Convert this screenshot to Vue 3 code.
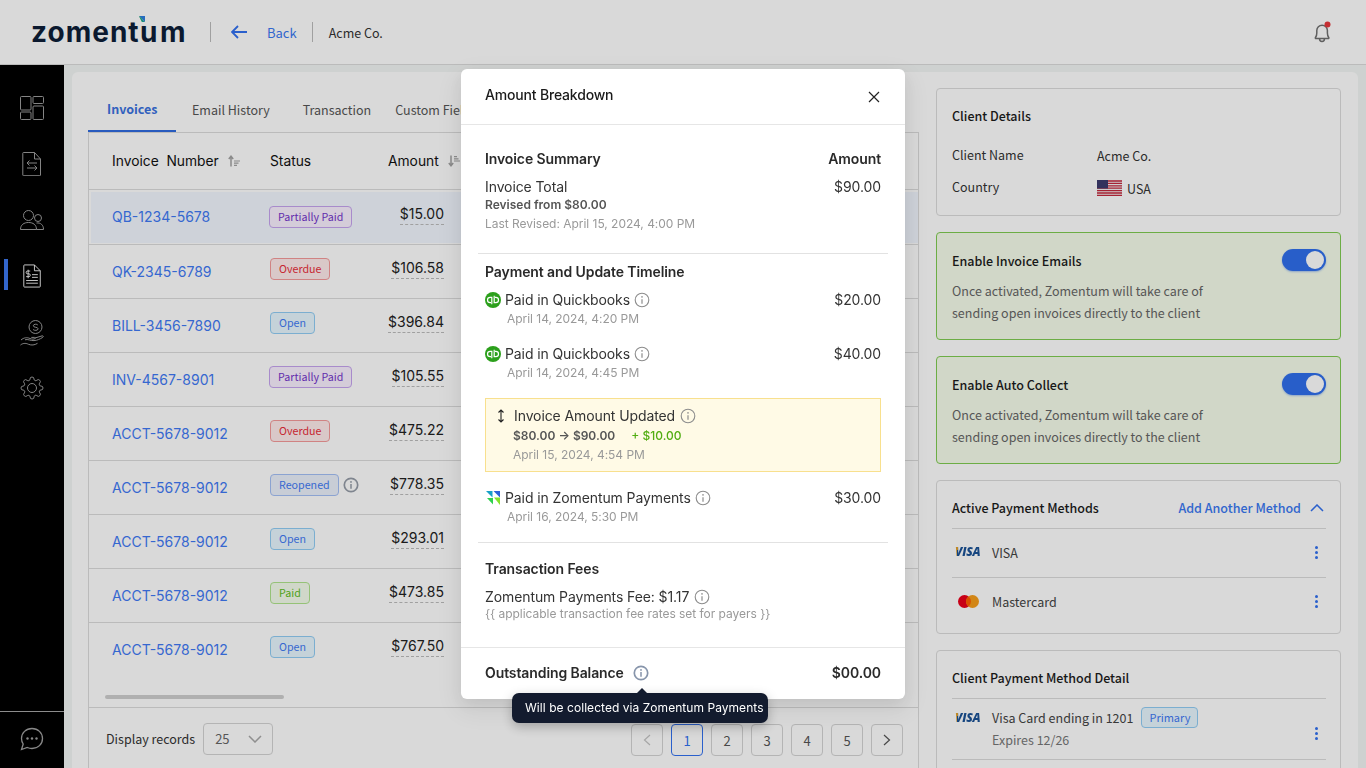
<script setup>
const navIcons = ['dash', 'file', 'users', 'invoice', 'hand', 'gear']
const rows = [
  { id: 'QB-1234-5678', status: 'Partially Paid', tone: 'purple', amount: '$15.00', selected: true },
  { id: 'QK-2345-6789', status: 'Overdue', tone: 'red', amount: '$106.58' },
  { id: 'BILL-3456-7890', status: 'Open', tone: 'blue', amount: '$396.84' },
  { id: 'INV-4567-8901', status: 'Partially Paid', tone: 'purple', amount: '$105.55' },
  { id: 'ACCT-5678-9012', status: 'Overdue', tone: 'red', amount: '$475.22' },
  { id: 'ACCT-5678-9012', status: 'Reopened', tone: 'indigo', amount: '$778.35', info: true },
  { id: 'ACCT-5678-9012', status: 'Open', tone: 'blue', amount: '$293.01' },
  { id: 'ACCT-5678-9012', status: 'Paid', tone: 'green', amount: '$473.85' },
  { id: 'ACCT-5678-9012', status: 'Open', tone: 'blue', amount: '$767.50' },
]
const pages = ['1', '2', '3', '4', '5']
const toggles = ['Enable Invoice Emails', 'Enable Auto Collect']
</script>

<template>
  <div class="app">
    <svg class="defs" aria-hidden="true">
      <symbol id="info" viewBox="0 0 16 16">
        <circle cx="8" cy="8" r="6.8" fill="none" stroke="currentColor" stroke-width="1.1" />
        <circle cx="8" cy="4.9" r=".8" fill="currentColor" />
        <path d="M8 7.2v4.6" fill="none" stroke="currentColor" stroke-width="1.2" />
      </symbol>
      <symbol id="info-b" viewBox="0 0 16 16">
        <circle cx="8" cy="8" r="6.7" fill="none" stroke="currentColor" stroke-width="1.7" />
        <circle cx="8" cy="4.9" r=".95" fill="currentColor" />
        <path d="M8 7v4.800" fill="none" stroke="currentColor" stroke-width="1.5" />
      </symbol>
      <symbol id="qb" viewBox="0 0 16 16">
        <circle cx="8" cy="8" r="8" fill="#2ca01c" />
        <path d="M6.800 12.200V5.300H5.200a2.700 2.700 0 0 0 0 5.400H6M9.200 3.800v6.900h1.600a2.700 2.700 0 0 0 0-5.400H10" fill="none" stroke="#fff" stroke-width="1.200" />
      </symbol>
      <symbol id="sort" viewBox="0 0 12 12">
        <path d="M3 11.500V1.500M.8 4 3 1.300 5.200 4" fill="none" stroke="currentColor" stroke-width="1.500" />
        <path d="M6 6h6M6 8.200h4.500M6 10.400h3" fill="none" stroke="currentColor" stroke-width="1.200" />
      </symbol>
    </svg>

    <header class="topbar">
      <div class="logo">
        <span class="logo-word"><span class="lw-a">zomen</span><span class="lw-b">t</span><span class="lw-c">um</span></span>
        <svg class="logo-mark" viewBox="0 0 6 6"><path d="M0 0h6v6z" fill="#2e7fe0" /><path d="M0 0l3 3v3z" fill="#5cc23a" /><path d="M0 0l6 6H3z" fill="#19a29a" /></svg>
      </div>
      <span class="vsep logo-sep"></span>
      <svg class="back-arrow" viewBox="0 0 16 14"><path d="M16 7H1M7 1 1 7l6 6" fill="none" stroke="#3271f0" stroke-width="1.800" /></svg>
      <a class="back">Back</a>
      <span class="vsep"></span>
      <span class="crumb">Acme Co.</span>
      <svg class="bell" viewBox="0 0 20 22">
        <path d="M3.500 16.500c1-1.400 1.300-2.500 1.300-4.500V9.500a5.300 5.300 0 0 1 10.600 0V12c0 2 .3 3.100 1.300 4.500.4.600.1 1-.6 1H4.100c-.7 0-1-.4-.6-1zM7.500 17.500c0 4 5 4 5 0" fill="none" stroke="#707070" stroke-width="1.500" />
        <circle cx="15.500" cy="3.500" r="3" fill="#e8383d" />
      </svg>
    </header>

    <div class="shell">
      <nav class="sidebar">
        <div v-for="n in navIcons" :key="n" class="nav-item" :class="{ active: n === 'invoice' }">
          <svg v-if="n === 'dash'" viewBox="0 0 24 24" class="nav-icon">
            <rect x=".5" y=".5" width="10.500" height="13.500" rx="1" /><rect x="13" y=".5" width="10.500" height="7" rx="1" />
            <rect x=".5" y="16" width="10.500" height="7.500" rx="1" /><rect x="13" y="10" width="10.500" height="13.500" rx="1" />
          </svg>
          <svg v-else-if="n === 'file'" viewBox="0 0 24 24" class="nav-icon">
            <path d="M3.500.5h11l6 6.500v16a.7.7 0 0 1-.7.7H3.500a.7.7 0 0 1-.7-.7V1.200a.7.7 0 0 1 .7-.7zM14.500.5V7h6M7 11h10M9.500 8.500 7 11l2.500 2.500M17 16H7M14.500 13.500 17 16l-2.500 2.500" />
          </svg>
          <svg v-else-if="n === 'users'" viewBox="0 0 24 20" class="nav-icon users">
            <circle cx="8.500" cy="5.500" r="5" /><circle cx="18" cy="8" r="3.500" />
            <path d="M.5 19.500c0-4.800 3.500-7 8-7s8 2.200 8 7zM16.500 13c4-.5 7 1.800 7 6.500h-7" />
          </svg>
          <svg v-else-if="n === 'invoice'" viewBox="0 0 20 26" class="nav-icon inv">
            <path d="M1.700.7h11l6.500 6.500v17.300a.8.800 0 0 1-.8.8H1.700a.8.800 0 0 1-.8-.8V1.500a.8.800 0 0 1 .8-.8zM12.700.7v6.500h6.500M10 11.500h6.500M10 14.500h6.500M3.500 18h13M3.500 21h13M8 7.500H5a1.500 1.500 0 0 0 0 3h1.500a1.500 1.500 0 0 1 0 3.200H3.500M5.700 6v9.500" />
          </svg>
          <svg v-else-if="n === 'hand'" viewBox="0 0 24 26" class="nav-icon hand">
            <circle cx="15.500" cy="7" r="6.500" />
            <path d="M17.800 5c-.6-1.100-4.500-1.200-4.500.8 0 2 4.800 1 4.800 3 0 2-4.100 1.900-5 .7M1 20c3-2.600 6-2.800 9-1.500 2 .9 4 .7 5 .1.800-.5.300-1.200-.7-1.200h-3M15 18l7-2.100c1.300-.3 1.800.9.700 1.500-3 1.800-5.500 3-8.700 3.200-4 .2-6-1.800-9-.8M.5 25c3-2.400 6-1.700 8-.7 3 1.200 6 .9 9-1" />
          </svg>
          <svg v-else viewBox="0 0 24 24" class="nav-icon">
            <circle cx="12" cy="12" r="4.500" />
            <path d="M19.400 15a1.650 1.650 0 0 0 .33 1.820l.06.06a2 2 0 0 1 0 2.830 2 2 0 0 1-2.830 0l-.06-.06a1.650 1.650 0 0 0-1.820-.33 1.650 1.650 0 0 0-1 1.510V21a2 2 0 0 1-2 2 2 2 0 0 1-2-2v-.09A1.650 1.650 0 0 0 9 19.400a1.650 1.650 0 0 0-1.820.33l-.06.06a2 2 0 0 1-2.830 0 2 2 0 0 1 0-2.830l.06-.06a1.650 1.650 0 0 0 .33-1.820 1.650 1.650 0 0 0-1.510-1H3a2 2 0 0 1-2-2 2 2 0 0 1 2-2h.09A1.650 1.650 0 0 0 4.600 9a1.650 1.650 0 0 0-.33-1.820l-.06-.06a2 2 0 0 1 0-2.830 2 2 0 0 1 2.830 0l.06.06a1.650 1.650 0 0 0 1.820.33H9a1.650 1.650 0 0 0 1-1.510V3a2 2 0 0 1 2-2 2 2 0 0 1 2 2v.09a1.650 1.650 0 0 0 1 1.510 1.650 1.650 0 0 0 1.820-.33l.06-.06a2 2 0 0 1 2.830 0 2 2 0 0 1 0 2.830l-.06.06a1.650 1.650 0 0 0-.33 1.820V9a1.650 1.650 0 0 0 1.510 1H21a2 2 0 0 1 2 2 2 2 0 0 1-2 2h-.09a1.650 1.650 0 0 0-1.510 1z" />
          </svg>
        </div>
        <div class="nav-foot">
          <svg viewBox="0 0 24 24" class="chat">
            <path d="M12 1.500c6 0 10.500 4.300 10.500 10s-4.500 10-10.500 10c-1.700 0-3.300-.4-4.700-1L1.500 22.500l1.700-5.500A9.700 9.700 0 0 1 1.500 11.500c0-5.700 4.500-10 10.500-10z" />
            <circle cx="7.500" cy="11.500" r="1.200" class="dot" /><circle cx="12" cy="11.500" r="1.200" class="dot" /><circle cx="16.500" cy="11.500" r="1.200" class="dot" />
          </svg>
        </div>
      </nav>

      <main class="main">
        <div class="card">
          <section class="left">
            <div class="tabs">
              <a class="tab current">Invoices</a>
              <a class="tab email">Email History</a>
              <a class="tab trans">Transaction</a>
              <a class="tab custom">Custom Fields</a>
            </div>
            <div class="table">
              <div class="thead">
                <div class="c-id">Invoice&nbsp; Number <svg class="sort"><use href="#sort" /></svg></div>
                <div class="c-st">Status</div>
                <div class="c-am">Amount <svg class="sort flip"><use href="#sort" /></svg></div>
              </div>
              <div v-for="(r, i) in rows" :key="i" class="row" :class="{ selected: r.selected, last: i === rows.length - 1 }">
                <a class="c-id link">{{ r.id }}</a>
                <div class="c-st st-cell">
                  <span class="tag" :class="r.tone">{{ r.status }}</span>
                  <svg v-if="r.info" class="row-info"><use href="#info-b" /></svg>
                </div>
                <div class="c-am"><span class="amount">{{ r.amount }}</span></div>
              </div>
              <div class="track"><div class="thumb"></div></div>
              <div class="tfoot">
                <div class="records">
                  <span>Display records</span>
                  <div class="select">
                    <span>25</span>
                    <svg viewBox="0 0 14 8"><path d="M1 1l6 6 6-6" fill="none" stroke="#a8a8a8" stroke-width="1.500" /></svg>
                  </div>
                </div>
                <div class="pager">
                  <button class="pg off"><svg viewBox="0 0 8 12"><path d="M7 1 1.500 6 7 11" fill="none" stroke="currentColor" stroke-width="1.200" /></svg></button>
                  <button v-for="p in pages" :key="p" class="pg" :class="{ now: p === '1' }">{{ p }}</button>
                  <button class="pg"><svg viewBox="0 0 8 12"><path d="M1 1l5.500 5L1 11" fill="none" stroke="currentColor" stroke-width="1.200" /></svg></button>
                </div>
              </div>
            </div>
          </section>

          <aside class="right">
            <div class="panel client">
              <h3>Client Details</h3>
              <div class="kv first"><span class="k">Client Name</span><span class="v acme">Acme Co.</span></div>
              <div class="kv second">
                <span class="k">Country</span>
                <span class="v usa">
                  <svg class="flag" viewBox="0 0 25 16">
                    <rect width="25" height="16" fill="#f3f3f3" />
                    <path d="M0 1h25M0 3.400h25M0 5.800h25M0 8.200h25M0 10.600h25M0 13h25M0 15.300h25" stroke="#c4283c" stroke-width="1.300" />
                    <rect width="11" height="8.500" fill="#3c3b6e" />
                  </svg>
                  USA
                </span>
              </div>
            </div>

            <div v-for="t in toggles" :key="t" class="panel enable">
              <div class="enable-head">
                <h3>{{ t }}</h3>
                <span class="switch"><span class="knob"></span></span>
              </div>
              <p>Once activated, Zomentum will take care of<br />sending open invoices directly to the client</p>
            </div>

            <div class="panel methods">
              <div class="m-head">
                <h3>Active Payment Methods</h3>
                <a class="add">Add Another Method</a>
                <svg class="chev" viewBox="0 0 14 8"><path d="M1 7l6-6 6 6" fill="none" stroke="#3271f0" stroke-width="1.500" /></svg>
              </div>
              <div class="m-row">
                <span class="brand"><span class="visa">VISA</span></span>
                <span class="m-name">VISA</span>
                <span class="kebab"><i></i><i></i><i></i></span>
              </div>
              <div class="m-row">
                <span class="brand"><svg class="mc" viewBox="0 0 21 13"><circle cx="6.500" cy="6.500" r="6.500" fill="#eb001b" /><circle cx="14.500" cy="6.500" r="6.500" fill="#f79e1b" /><path d="M10.500 1.400a6.500 6.500 0 0 1 0 10.200 6.500 6.500 0 0 1 0-10.200z" fill="#ff5f00" /></svg></span>
                <span class="m-name">Mastercard</span>
                <span class="kebab"><i></i><i></i><i></i></span>
              </div>
            </div>

            <div class="panel detail">
              <h3>Client Payment Method Detail</h3>
              <div class="d-row">
                <span class="brand top"><span class="visa">VISA</span></span>
                <div class="d-text">
                  <div class="d-line"><span class="m-name">Visa Card ending in 1201</span><span class="primary">Primary</span></div>
                  <div class="expires">Expires 12/26</div>
                </div>
                <span class="kebab"><i></i><i></i><i></i></span>
              </div>
            </div>
          </aside>
        </div>
      </main>
    </div>

    <div class="overlay">
      <div class="modal">
        <div class="m-title">
          <span>Amount Breakdown</span>
          <svg class="close" viewBox="0 0 12 12"><path d="M1 1l10 10M11 1 1 11" fill="none" stroke="#222" stroke-width="1.200" /></svg>
        </div>

        <section class="sec s1">
          <div class="line head"><span>Invoice Summary</span><span>Amount</span></div>
          <div class="line body total"><span>Invoice Total</span><span class="money">$90.00</span></div>
          <div class="revised">Revised from $80.00</div>
          <div class="muted last-rev">Last Revised: April 15, 2024, 4:00 PM</div>
        </section>
        <hr class="rule" />

        <section class="sec s2">
          <div class="line head"><span>Payment and Update Timeline</span></div>
          <div class="line body item">
            <span class="with-icon"><svg class="src"><use href="#qb" /></svg>Paid in Quickbooks<svg class="i"><use href="#info" /></svg></span>
            <span class="money">$20.00</span>
          </div>
          <div class="muted when">April 14, 2024, 4:20 PM</div>
          <div class="line body item second">
            <span class="with-icon"><svg class="src"><use href="#qb" /></svg>Paid in Quickbooks<svg class="i"><use href="#info" /></svg></span>
            <span class="money">$40.00</span>
          </div>
          <div class="muted when">April 14, 2024, 4:45 PM</div>

          <div class="notice">
            <div class="n-title">
              <svg class="updown" viewBox="0 0 8 14"><path d="M4 1v12M1.500 3.500 4 1l2.500 2.500M1.500 10.500 4 13l2.500-2.500" fill="none" stroke="#222" stroke-width="1.100" /></svg>
              <span>Invoice Amount Updated</span><svg class="i"><use href="#info" /></svg>
            </div>
            <div class="n-change"><span class="revised">$80.00 → $90.00</span><span class="plus">+ $10.00</span></div>
            <div class="muted n-when">April 15, 2024, 4:54 PM</div>
          </div>

          <div class="line body item third">
            <span class="with-icon">
              <svg class="src z" viewBox="0 0 14 14">
                <path d="M0 0h6.500v6.500z" fill="#17a0c8" /><path d="M7.500 0H14v6.500z" fill="#2b62d9" />
                <path d="M1 7h6v6.500z" fill="#2fd14f" /><path d="M8 6.500h6V14z" fill="#86e22c" />
              </svg>Paid in Zomentum Payments<svg class="i"><use href="#info" /></svg>
            </span>
            <span class="money">$30.00</span>
          </div>
          <div class="muted when">April 16, 2024, 5:30 PM</div>
        </section>
        <hr class="rule" />

        <section class="sec s3">
          <div class="line head"><span>Transaction Fees</span></div>
          <div class="line body fee"><span class="with-icon">Zomentum Payments Fee: $1.17<svg class="i"><use href="#info" /></svg></span></div>
          <div class="muted rates">&#123;&#123; applicable transaction fee rates set for payers &#125;&#125;</div>
        </section>

        <footer class="m-foot">
          <span class="with-icon">Outstanding Balance<svg class="i strong"><use href="#info-b" /></svg></span>
          <span>$00.00</span>
        </footer>

        <div class="tooltip">Will be collected via Zomentum Payments</div>
      </div>
    </div>
  </div>
</template>

<style>
html, body { margin: 0; height: 100%; overflow: hidden; }
</style>

<style scoped>
.app { height: 100vh; display: flex; flex-direction: column; font-family: "Noto Sans CJK JP", "Noto Sans", sans-serif; color: #222; background: #f3f6f5; overflow: hidden; }
.defs { position: absolute; width: 0; height: 0; }
h3 { margin: 0; font-size: 12.500px; font-weight: 500; line-height: 20px; color: #1c1c1c; }

.topbar { height: 64px; flex: none; box-sizing: content-box; background: #fff; border-bottom: 1px solid #dcdcdc; display: flex; align-items: center; padding-left: 32px; }
.logo { position: relative; width: 155px; height: 26px; }
.logo-word { display: block; margin-left: -1px; font-family: Inter, sans-serif; font-weight: 700; font-size: 28px; line-height: 26px; color: #0d1e38; white-space: nowrap; }
.lw-a { letter-spacing: 1px; }
.lw-b { letter-spacing: 1.500px; }
.lw-c { letter-spacing: 2.500px; }
.logo-mark { position: absolute; left: 107px; top: -3px; width: 6px; height: 6px; }
.vsep { width: 1px; height: 20px; background: #bdbdbd; margin-left: 15px; }
.logo-sep { margin-left: 23px; }
.back-arrow { width: 16px; height: 14px; margin-left: 20px; }
.back { margin-left: 20px; font-size: 13px; color: #3a78f2; }
.crumb { margin-left: 16px; font-size: 12.500px; color: #333; }
.bell { width: 20px; height: 22px; margin-left: auto; margin-right: 34px; }

.shell { flex: 1; display: flex; min-height: 0; }
.sidebar { width: 64px; flex: none; background: #000; display: flex; flex-direction: column; padding-top: 15px; box-sizing: border-box; }
.nav-item { height: 56px; flex: none; display: flex; align-items: center; justify-content: center; position: relative; }
.nav-icon { width: 24px; height: 24px; fill: none; stroke: #9c9c9c; stroke-width: 1; }
.nav-icon.users { height: 20px; }
.nav-icon.inv { width: 18px; height: 24px; stroke: #fff; }
.nav-icon.hand { height: 26px; margin-top: 2px; }
.nav-item.active::before { content: ""; position: absolute; left: 4px; top: 11px; width: 4px; height: 31px; background: #3c78f0; }
.nav-foot { margin-top: auto; height: 57px; border-top: 1px solid #a5a5a5; display: flex; align-items: center; justify-content: center; box-sizing: border-box; }
.chat { width: 24px; height: 24px; fill: none; stroke: #a0a0a0; stroke-width: 1.300; margin-top: -2px; }
.chat .dot { fill: #a0a0a0; stroke: none; }

.main { flex: 1; min-width: 0; padding: 7px 8px 0; box-sizing: border-box; }
.card { height: 100%; background: #fff; border-radius: 6px 6px 0 0; padding: 16px 17px 0 16px; display: flex; gap: 17px; box-sizing: border-box; }

.left { width: 831px; flex: none; display: flex; flex-direction: column; }
.tabs { height: 44px; position: relative; display: flex; font-size: 12.500px; color: #555; line-height: 20px; }
.tab { padding-top: 12px; white-space: nowrap; }
.tab.current { width: 88px; box-sizing: border-box; padding-left: 19px; padding-top: 11px; border-bottom: 2px solid #2f6be0; height: 44px; color: #3a72e0; font-weight: 600; }
.tab.email { margin-left: 16px; }
.tab.trans { margin-left: 33px; }
.tab.custom { margin-left: 24px; }
.table { flex: 1; border: 1px solid #dcdcdc; border-bottom: 0; display: flex; flex-direction: column; font-family: Inter, sans-serif; }
.thead, .row { display: flex; padding-left: 23px; border-bottom: 1px solid #dcdcdc; align-items: center; }
.thead { height: 57px; flex: none; box-sizing: border-box; font-size: 13.800px; font-weight: 400; color: #111; }
.thead > div { margin-bottom: 1px; }
.row { height: 54px; flex: none; box-sizing: border-box; font-size: 14px; }
.row.selected { height: 55px; background: linear-gradient(#f2f7ff, #f2f7ff) 2px 2px / calc(100% - 2px) calc(100% - 3px) no-repeat; }
.row.last { border-bottom: 0; }
.c-id { width: 158px; flex: none; white-space: nowrap; display: flex; align-items: center; }
.c-st { width: 118px; flex: none; }
.c-am { width: 56px; flex: none; white-space: nowrap; display: flex; align-items: center; }
.row .c-am { justify-content: flex-end; margin-bottom: 6px; }
.sort { width: 12px; height: 12px; margin-left: 9px; color: #a3a3a3; flex: none; }
.sort.flip { transform: scaleY(-1); }
.link { color: #3f7af5; margin-bottom: 1px; }
.row.selected .link { margin-bottom: 2px; }
.st-cell { display: flex; align-items: center; margin-bottom: 6px; }
.row.selected .st-cell { margin-bottom: 0; }
.row.selected .c-am { margin-bottom: 4px; }
.tag { box-sizing: border-box; height: 22px; padding: 0 8px; border: 1px solid; border-radius: 4px; font: 10.700px/20px "Noto Sans CJK JP", "Noto Sans", sans-serif; white-space: nowrap; }
.tag.purple { margin-left: -1px; background: #f9f0ff; border-color: #c6a4ef; color: #7434cc; }
.tag.red { background: #ffecec; border-color: #f59a9a; color: #ea2b38; }
.tag.blue { background: #e8f7ff; border-color: #91cdf5; color: #3f7af5; }
.tag.indigo { background: #ecf1fc; border-color: #a4c0f6; color: #3f7af5; }
.tag.green { background: #f5fded; border-color: #afe48c; color: #5cbd22; }
.row-info { width: 16px; height: 16px; margin-left: 4px; color: #969da8; }
.amount { color: #222; border-bottom: 1px dashed #bcbcbc; padding-bottom: 2px; line-height: 17px; }
.track { height: 30px; flex: none; padding: 18px 0 0 16px; box-sizing: border-box; }
.thumb { width: 179px; height: 4px; border-radius: 2px; background: #cfcfcf; }
.tfoot { flex: 1; border-top: 1px solid #dcdcdc; display: flex; justify-content: space-between; padding: 15px 15px 0 17px; font-family: "Noto Sans CJK JP", "Noto Sans", sans-serif; }
.records { display: flex; align-items: flex-start; font-size: 12.500px; gap: 8px; line-height: 32px; color: #333; }
.select { width: 70px; height: 32px; box-sizing: border-box; border: 1px solid #d4d4d4; border-radius: 4px; display: flex; align-items: center; justify-content: space-between; padding: 0 10px 0 11px; color: #666; font-size: 13px; }
.select svg { width: 14px; height: 8px; }
.pager { display: flex; gap: 8px; margin-top: 1px; }
.pg { width: 32px; height: 32px; padding: 0; border: 1px solid #d4d4d4; border-radius: 4px; background: transparent; font: 13px "Noto Sans CJK JP", "Noto Sans", sans-serif; color: #555; display: flex; align-items: center; justify-content: center; }
.pg svg { width: 8px; height: 12px; }
.pg.off { color: #c4c4c4; }
.pg.now { border-color: #3271f0; color: #3271f0; }

.right { width: 405px; flex: none; display: flex; flex-direction: column; gap: 16px; }
.panel { border: 1px solid #dcdcdc; border-radius: 4px; padding: 0 14px 0 15px; flex: none; box-sizing: border-box; }
.client { height: 128px; padding-top: 17px; }
.kv { display: flex; font-size: 12.500px; color: #333; line-height: 20px; }
.kv.first { margin-top: 19px; }
.kv.second { margin-top: 11px; }
.k { width: 145px; flex: none; }
.v.acme { margin-top: 1px; }
.v.usa { display: flex; align-items: center; gap: 5px; margin-top: 2px; }
.flag { width: 25px; height: 16px; margin-top: -2px; }
.enable { height: 108px; background: #f6fdeb; border-color: #7fcc52; padding-top: 16px; }
.enable-head { display: flex; justify-content: space-between; align-items: flex-start; }
.enable-head h3 { margin-top: 2px; }
.switch { width: 44px; height: 22px; background: #2f6fed; border-radius: 11px; display: flex; align-items: center; justify-content: flex-end; padding: 0 2px; box-sizing: border-box; box-shadow: 0 1px 2px rgba(47, 111, 237, .4); }
.knob { width: 18px; height: 18px; background: #fff; border-radius: 50%; }
.enable p { margin: 9px 0 0; font-size: 12.500px; line-height: 22px; color: #666; }
.methods { height: 154px; }
.m-head { height: 48px; display: flex; align-items: center; border-bottom: 1px solid #dcdcdc; padding-top: 6px; box-sizing: border-box; }
.add { margin-left: auto; font-size: 12.500px; font-weight: 500; color: #3a78f2; }
.chev { width: 14px; height: 8px; margin-left: 9px; margin-right: 2px; }
.m-row { height: 49px; display: flex; align-items: center; padding-bottom: 2px; border-bottom: 1px solid #dcdcdc; box-sizing: border-box; font-size: 12.500px; }
.m-row:last-child { border-bottom: 0; }
.brand { width: 40px; flex: none; display: flex; padding-left: 3px; box-sizing: border-box; }
.brand.top { align-self: flex-start; margin-top: 12px; }
.visa { font: italic 800 12px/14px "Open Sans", sans-serif; letter-spacing: -.2px; color: transparent; background: linear-gradient(100deg, #e0a030 0 12%, #1a5296 12%); -webkit-background-clip: text; background-clip: text; }
.mc { width: 21px; height: 13px; margin-left: 3px; }
.m-name { color: #444; }
.kebab { margin-left: auto; margin-right: 8px; display: flex; flex-direction: column; gap: 2px; }
.kebab i { width: 3px; height: 3px; border-radius: 50%; background: #3271f0; display: block; }
.detail { height: 160px; }
.detail h3 { height: 48px; line-height: 20px; padding-top: 17px; box-sizing: border-box; border-bottom: 1px solid #dcdcdc; }
.d-row { height: 61px; display: flex; align-items: center; border-bottom: 1px solid #dcdcdc; box-sizing: border-box; font-size: 12.500px; }
.d-text { padding-bottom: 1px; }
.d-line { display: flex; align-items: center; gap: 8px; height: 22px; }
.expires { line-height: 22px; color: #777; }
.primary { height: 21px; box-sizing: border-box; padding: 0 7px; border: 1px solid #91cdf5; border-radius: 4px; background: #e8f7ff; color: #3f7af5; font-size: 11px; line-height: 19px; }
.detail .kebab { margin-top: 8px; }

.overlay { position: fixed; inset: 0; background: rgba(0, 0, 0, .15); display: flex; justify-content: center; align-items: flex-start; padding-top: 69px; box-sizing: border-box; }
.modal { position: relative; width: 444px; height: 630px; background: #fff; border-radius: 6px; box-shadow: 0 6px 16px rgba(0, 0, 0, .08), 0 9px 28px 8px rgba(0, 0, 0, .05); font-family: Inter, sans-serif; color: #333; display: flex; flex-direction: column; }
.m-title { height: 56px; box-sizing: border-box; flex: none; border-bottom: 1px solid #e6e6e6; padding: 16px 24px 0; font-size: 14px; font-weight: 500; line-height: 20px; letter-spacing: -.18px; color: #1a1a1a; display: flex; justify-content: space-between; }
.close { width: 12px; height: 12px; margin: 6px 1px 0 0; }
.sec { padding: 0 24px; }
.s1 { padding-top: 24px; padding-bottom: 21px; }
.s2 { padding-top: 8px; padding-bottom: 17px; }
.s3 { padding-top: 16px; height: 104px; box-sizing: border-box; }
.rule { margin: 0 17px; border: 0; border-top: 1px solid #e2e2e2; height: 0; flex: none; }
.line { display: flex; justify-content: space-between; }
.head { font-size: 14px; font-weight: 600; line-height: 20px; letter-spacing: -.1px; color: #2a2a2a; }
.body { font-size: 14px; line-height: 18px; letter-spacing: -.1px; color: #333; margin-top: 9px; }
.money { color: #333; }
.revised { font-size: 12px; font-weight: 600; line-height: 16px; color: #555; }
.s1 .revised { margin-top: 1px; }
.muted { font-size: 12px; line-height: 16px; color: #999; letter-spacing: -.03px; }
.last-rev { margin-top: 3px; }
.when { margin: 2px 0 0 22px; }
.item.second { margin-top: 18px; }
.item.third { margin-top: 17px; }
.with-icon { display: inline-flex; align-items: center; }
.src { width: 16px; height: 16px; margin-right: 4px; margin-top: -1px; }
.src.z { width: 14px; height: 14px; margin: 0 5px 0 1px; }
.i { width: 16px; height: 16px; margin-left: 4px; color: #8c8c8c; }
.i.strong { margin-left: 9px; color: #8795ab; }
.notice { margin-top: 17px; height: 74px; box-sizing: border-box; background: #fffae6; border: 1px solid #f8e08e; padding: 8px 0 0 27px; }
.n-title { display: flex; align-items: center; font-size: 14px; line-height: 18px; letter-spacing: -.1px; position: relative; padding-left: 1px; }
.updown { position: absolute; left: -16px; top: 2px; width: 8px; height: 14px; }
.n-title .i { margin-left: 5px; }
.n-change { display: flex; margin-top: 3px; }
.plus { margin-left: 16px; font-size: 12px; font-weight: 500; line-height: 16px; color: #52ad12; }
.n-when { margin-top: 3px; }
.fee { margin-top: 9px; }
.fee .i { margin-left: 5px; }
.m-foot { margin-top: auto; height: 52px; box-sizing: border-box; flex: none; border-top: 1px solid #e6e6e6; padding: 15px 24px 0; display: flex; justify-content: space-between; align-items: flex-start; font-size: 14px; font-weight: 600; line-height: 20px; letter-spacing: -.1px; color: #2a2a2a; }
.tooltip { position: absolute; left: 51px; top: 624px; height: 30px; width: 256px; box-sizing: border-box; padding: 0 0 0 13px; background: #131b2e; color: #fff; border-radius: 7px; font-size: 12px; line-height: 29px; letter-spacing: .05px; white-space: nowrap; box-shadow: 0 4px 12px rgba(0, 0, 0, .25); }
.tooltip::before { content: ""; position: absolute; left: 124px; top: -5px; border: 6px solid transparent; border-top: 0; border-bottom: 6px solid #131b2e; }
</style>
